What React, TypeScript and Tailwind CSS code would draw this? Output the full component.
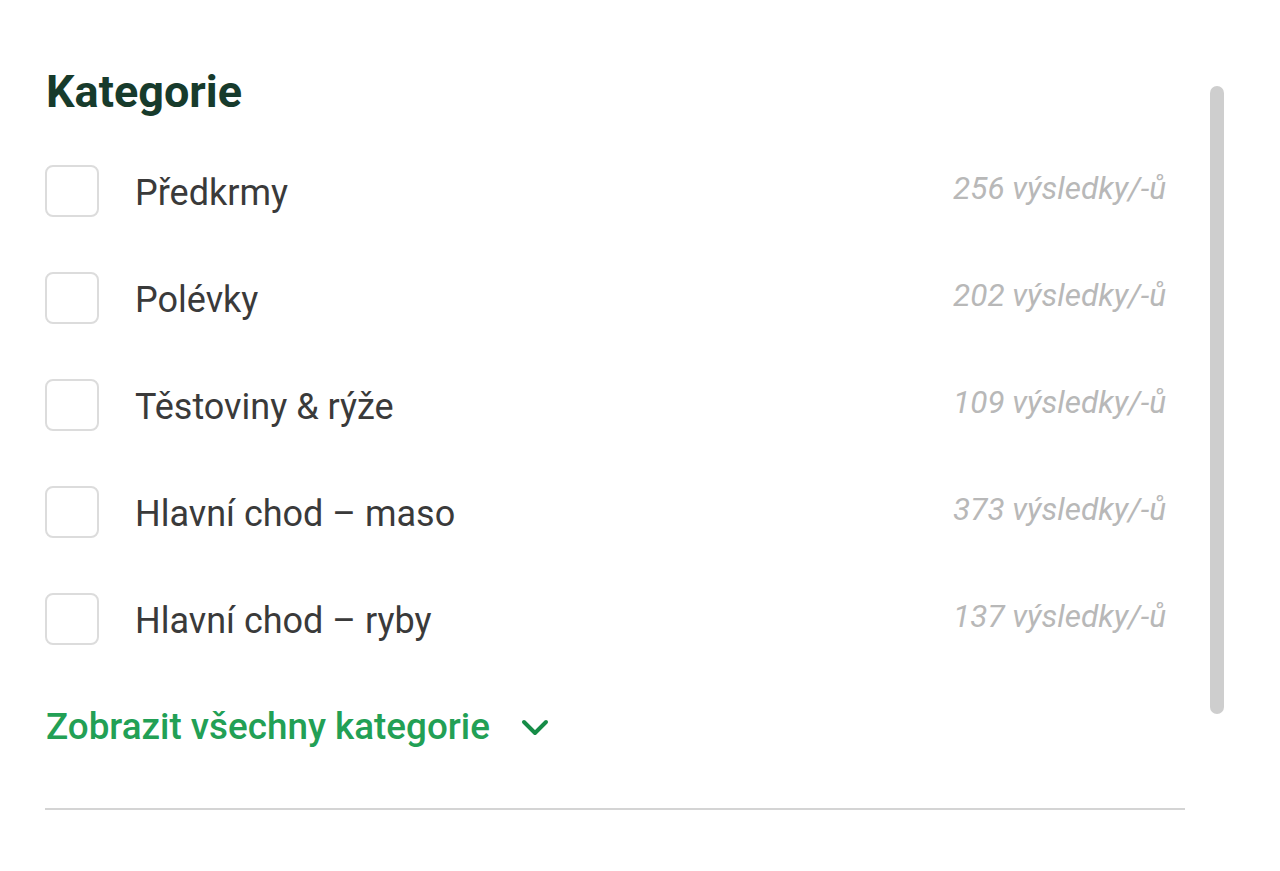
import React from "react";

const items = [
  { label: "Předkrmy", count: 256 },
  { label: "Polévky", count: 202 },
  { label: "Těstoviny & rýže", count: 109 },
  { label: "Hlavní chod – maso", count: 373 },
  { label: "Hlavní chod – ryby", count: 137 },
];

export default function App() {
  return (
    <div
      className="w-full h-[871px] bg-white flex pl-[45px] pt-[70px]"
      style={{ fontFamily: "Roboto, 'Noto Sans', sans-serif" }}
    >
      <div className="w-[1140px] flex flex-col">
        <h2 className="ml-[1px] text-[45px] leading-[44px] font-bold text-[#173b2c]">
          Kategorie
        </h2>
        <ul className="mt-[51px] flex flex-col gap-[55px] pr-[19px]">
          {items.map((it) => (
            <li key={it.label} className="flex items-center">
              <span className="w-[54px] h-[52px] shrink-0 rounded-[8px] border-2 border-[#dcdcdc] bg-white" />
              <span className="ml-[36px] pt-[4px] text-[36px] leading-[36px] text-[#3a3a3a]">
                {it.label}
              </span>
              <span className="ml-auto pb-[6px] text-[31.5px] leading-[31px] italic text-[#b8b8b8]">
                {it.count} výsledky/-ů
              </span>
            </li>
          ))}
        </ul>
        <button className="mt-[63px] flex items-center self-start">
          <span className="ml-[1px] text-[36.8px] leading-[37px] font-medium text-[#22a055]">
            Zobrazit všechny kategorie
          </span>
          <svg
            className="ml-[31px] mt-[2px]"
            width="28"
            height="17"
            viewBox="0 0 28 17"
            fill="none"
          >
            <polyline
              points="3,3 14,14 25,3"
              stroke="#168c47"
              strokeWidth="4"
              strokeLinecap="round"
              strokeLinejoin="round"
            />
          </svg>
        </button>
        <div className="mt-[63px] h-[2px] bg-[#d4d4d4]" />
      </div>
      <div className="ml-[25px] mt-[16px] w-[14px] h-[628px] rounded-full bg-[#cecece]" />
    </div>
  );
}
